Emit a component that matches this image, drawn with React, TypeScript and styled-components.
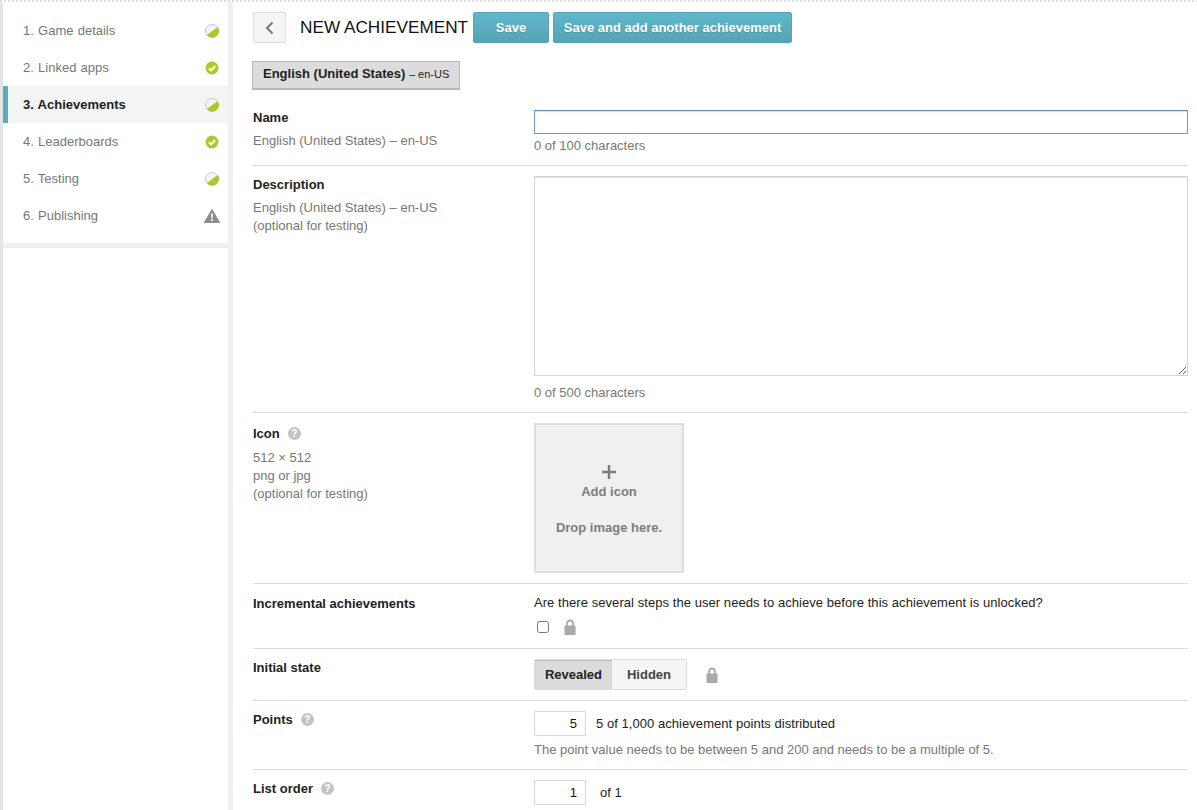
import type { FC } from 'react';
import styled, { createGlobalStyle } from 'styled-components';

const GlobalStyle = createGlobalStyle`
  html, body {
    margin: 0;
    height: 100%;
    overflow: hidden;
    background: #fff;
  }
  body {
    font-family: "Liberation Sans", Arial, sans-serif;
    font-size: 13px;
    color: #222;
  }
  #root {
    height: 100%;
  }
`;

type StepStatus = 'partial' | 'done' | 'warning';

const steps: { label: string; status: StepStatus; active?: boolean }[] = [
  { label: '1. Game details', status: 'partial' },
  { label: '2. Linked apps', status: 'done' },
  { label: '3. Achievements', status: 'partial', active: true },
  { label: '4. Leaderboards', status: 'done' },
  { label: '5. Testing', status: 'partial' },
  { label: '6. Publishing', status: 'warning' },
];

const StatusIcon: FC<{ status: StepStatus }> = ({ status }) => {
  if (status === 'warning') {
    return (
      <svg width="16" height="14" viewBox="0 0 16 14">
        <path d="M8 .5 15.6 13.5H.4Z" fill="#8d8d8d" stroke="#8d8d8d" strokeLinejoin="round" />
        <path d="M7.1 4.4h1.8l-.3 5H7.4Z M7.1 10.3h1.8V12H7.1Z" fill="#fff" />
      </svg>
    );
  }
  if (status === 'done') {
    return (
      <svg width="14" height="14" viewBox="0 0 14 14">
        <circle cx="7" cy="7" r="6.5" fill="#aec927" />
        <path d="M3.9 7.2 6.1 9.4 10.2 5" fill="none" stroke="#fff" strokeWidth="2" />
      </svg>
    );
  }
  return (
    <svg width="14" height="14" viewBox="0 0 14 14">
      <circle cx="7" cy="7" r="6.5" fill="#f4f4f4" stroke="#c9c9c9" />
      <path d="M12.6 2.9A6.5 6.5 0 0 1 1.9 11Z" fill="#aec927" />
    </svg>
  );
};

const LockIcon: FC = () => (
  <svg width="12" height="16" viewBox="0 0 12 16">
    <path d="M3 7V4.5a3 3 0 0 1 6 0V7" fill="none" stroke="#aaa" strokeWidth="1.8" />
    <rect x="0.5" y="6.5" width="11" height="9.5" rx="0.5" fill="#aaa" />
  </svg>
);

const App: FC = () => (
  <Page>
    <GlobalStyle />
    <TopStrip />
    <Body>
      <Sidebar>
        <StepList>
          {steps.map(({ label, status, active }) => (
            <StepItem key={label} $active={active}>
              {label}
              <StatusSlot>
                <StatusIcon status={status} />
              </StatusSlot>
            </StepItem>
          ))}
        </StepList>
      </Sidebar>

      <Main>
        <Header>
          <BackButton aria-label="Back">
            <svg width="9" height="14" viewBox="0 0 9 14">
              <path d="M7.5 1.5 2 7l5.5 5.5" fill="none" stroke="#777" strokeWidth="2" />
            </svg>
          </BackButton>
          <Title>NEW ACHIEVEMENT</Title>
          <PrimaryButton $width={76}>Save</PrimaryButton>
          <PrimaryButton $width={239}>Save and add another achievement</PrimaryButton>
        </Header>

        <LanguageTab>
          <strong>English (United States)</strong> <small>– en-US</small>
        </LanguageTab>

        <Row $bottom={12}>
          <LabelCol>
            <Label $top={-1}>Name</Label>
            <Hint $top={7}>English (United States) – en-US</Hint>
          </LabelCol>
          <div>
            <NameInput />
            <Counter>0 of 100 characters</Counter>
          </div>
        </Row>

        <Row $bottom={12}>
          <LabelCol>
            <Label>Description</Label>
            <Hint $top={7}>
              English (United States) – en-US
              <br />
              (optional for testing)
            </Hint>
          </LabelCol>
          <div>
            <Description />
            <Counter $top={9}>0 of 500 characters</Counter>
          </div>
        </Row>

        <Row>
          <LabelCol>
            <Label $top={2}>
              Icon
              <Help>?</Help>
            </Label>
            <Hint $top={8}>
              512 × 512
              <br />
              png or jpg
              <br />
              (optional for testing)
            </Hint>
          </LabelCol>
          <DropZone>
            <svg width="16" height="16" viewBox="0 0 16 16">
              <path d="M8 1v14M1 8h14" stroke="#7d7d7d" strokeWidth="2.5" />
            </svg>
            <strong>Add icon</strong>
            <strong>Drop image here.</strong>
          </DropZone>
        </Row>

        <Row $bottom={13}>
          <LabelCol>
            <Label $top={1}>Incremental achievements</Label>
          </LabelCol>
          <div>
            <Question>
              Are there several steps the user needs to achieve before this achievement is unlocked?
            </Question>
            <LockedCheck>
              <Checkbox type="checkbox" />
              <LockIcon />
            </LockedCheck>
          </div>
        </Row>

        <Row>
          <LabelCol>
            <Label>Initial state</Label>
          </LabelCol>
          <StateLine>
            <Segments>
              <Segment $selected>Revealed</Segment>
              <Segment>Hidden</Segment>
            </Segments>
            <LockIcon />
          </StateLine>
        </Row>

        <Row $bottom={12}>
          <LabelCol>
            <Label>
              Points
              <Help>?</Help>
            </Label>
          </LabelCol>
          <div>
            <NumberLine>
              <NumberInput defaultValue="5" />
              5 of 1,000 achievement points distributed
            </NumberLine>
            <Counter $top={6}>The point value needs to be between 5 and 200 and needs to be a multiple of 5.</Counter>
          </div>
        </Row>

        <Row>
          <LabelCol>
            <Label>
              List order
              <Help>?</Help>
            </Label>
          </LabelCol>
          <NumberLine $gap={14}>
            <NumberInput defaultValue="1" />
            of 1
          </NumberLine>
        </Row>
      </Main>
    </Body>
  </Page>
);

export default App;

const Page = styled.div`
  height: 100%;
  display: flex;
  flex-direction: column;
  overflow: hidden;
`;

const TopStrip = styled.div`
  flex: none;
  height: 2px;
  background: repeating-linear-gradient(90deg, #dcdcdc 0 2px, #fff 2px 4px);
`;

const Body = styled.div`
  flex: 1;
  display: flex;
  min-height: 0;
`;

const Sidebar = styled.nav`
  flex: none;
  width: 225px;
  box-sizing: content-box;
  border-left: 3px solid #e5e5e5;
  border-right: 5px solid #f0f0f0;
`;

const StepList = styled.ol`
  list-style: none;
  margin: 0;
  padding: 10px 0 9px;
  border-bottom: 5px solid #f0f0f0;
`;

const StepItem = styled.li<{ $active?: boolean }>`
  height: 37px;
  display: flex;
  align-items: center;
  justify-content: space-between;
  box-sizing: border-box;
  padding: 0 8px 0 ${(p) => (p.$active ? 15 : 20)}px;
  border-left: ${(p) => (p.$active ? '5px solid #5aacbe' : 'none')};
  background: ${(p) => (p.$active ? '#f4f4f4' : 'transparent')};
  color: ${(p) => (p.$active ? '#222' : '#777')};
  font-weight: ${(p) => (p.$active ? 'bold' : 'normal')};
  word-spacing: 0.6px;
`;

const StatusSlot = styled.span`
  width: 16px;
  height: 16px;
  display: flex;
  align-items: center;
  justify-content: center;
`;

const Main = styled.main`
  flex: 1;
  min-width: 0;
  padding: 10px 9px 0 20px;
`;

const Header = styled.div`
  display: flex;
  align-items: flex-start;
  height: 32px;
`;

const BackButton = styled.button`
  width: 33px;
  height: 31px;
  margin-right: 14px;
  padding: 0;
  display: flex;
  align-items: center;
  justify-content: center;
  background: #f5f5f5;
  border: 1px solid #dcdcdc;
  border-radius: 2px;
`;

const Title = styled.h1`
  margin: 0 5px 0 0;
  width: 168px;
  font-size: 17.2px;
  line-height: 31px;
  font-weight: normal;
  white-space: nowrap;
  color: #111;
`;

const PrimaryButton = styled.button<{ $width: number }>`
  width: ${(p) => p.$width}px;
  height: 31px;
  margin-right: 4px;
  padding: 0;
  font: bold 13px "Liberation Sans", Arial, sans-serif;
  color: #fff;
  text-shadow: 0 1px 1px rgba(0, 0, 0, 0.15);
  background: linear-gradient(#5fb8cb, #55a3b5);
  border: 1px solid #55a3b5;
  border-radius: 2px;
`;

const LanguageTab = styled.div`
  display: block;
  width: fit-content;
  box-sizing: border-box;
  height: 29px;
  margin: 17px 0 10px -1px;
  padding: 0 10px;
  line-height: 24px;
  background: #dcdcdc;
  border: 2px solid #b9b9b9;
  border-width: 1px 1px 2px;
  color: #222;

  small {
    font-size: 11px;
  }
`;

const Row = styled.section<{ $bottom?: number }>`
  display: grid;
  grid-template-columns: 281px 1fr;
  padding: 10px 0 ${(p) => p.$bottom ?? 10}px;
  border-bottom: 1px solid #ddd;

  &:last-child {
    border-bottom: none;
  }
`;

const LabelCol = styled.div`
  padding-top: 0;
`;

const Label = styled.div<{ $top?: number }>`
  display: flex;
  align-items: center;
  margin-top: ${(p) => p.$top ?? 0}px;
  min-height: 16px;
  font-weight: bold;
  color: #222;
`;

const Help = styled.span`
  width: 13px;
  height: 13px;
  margin-left: 8px;
  border-radius: 50%;
  background: #c4c4c4;
  color: #fff;
  font-size: 10px;
  font-weight: bold;
  line-height: 13px;
  text-align: center;
`;

const Hint = styled.div<{ $top?: number }>`
  margin-top: ${(p) => p.$top ?? 0}px;
  line-height: 18px;
  color: #777;
`;

const NameInput = styled.input`
  display: block;
  width: 100%;
  height: 24px;
  box-sizing: border-box;
  border: 1px solid #6a9bcb;
  border-top-color: #5f8fc0;
  box-shadow: inset 0 1px 1px #ddd;
  outline: none;
`;

const Counter = styled.div<{ $top?: number }>`
  margin-top: ${(p) => p.$top ?? 4}px;
  line-height: 15px;
  color: #777;
`;

const Description = styled.textarea`
  display: block;
  width: 100%;
  height: 200px;
  box-sizing: border-box;
  border: 1px solid #d4d4d4;
  box-shadow: inset 0 1px 1px #e6e6e6;
  outline: none;
`;

const DropZone = styled.div`
  width: 150px;
  height: 150px;
  box-sizing: border-box;
  display: flex;
  flex-direction: column;
  align-items: center;
  padding-top: 39px;
  background: #f0f0f0;
  border: 2px solid #dedede;
  color: #7d7d7d;

  strong {
    line-height: 16px;
    margin-top: 4px;
  }

  strong + strong {
    margin-top: 20px;
  }
`;

const Question = styled.div`
  line-height: 18px;
  color: #222;
  letter-spacing: 0.06px;
`;

const LockedCheck = styled.div`
  display: flex;
  align-items: center;
  height: 16px;
  margin-top: 7px;
  gap: 15px;
`;

const Checkbox = styled.input`
  width: 12px;
  height: 12px;
  margin: 0 0 0 3px;
`;

const StateLine = styled.div`
  display: flex;
  align-items: center;
  gap: 19px;
`;

const Segments = styled.div`
  display: flex;
  height: 31px;
  box-sizing: border-box;
  border: 1px solid #dcdcdc;
  border-radius: 2px;
`;

const Segment = styled.div<{ $selected?: boolean }>`
  display: flex;
  align-items: center;
  justify-content: center;
  width: ${(p) => (p.$selected ? 77 : 74)}px;
  font-weight: bold;
  color: ${(p) => (p.$selected ? '#222' : '#444')};
  background: ${(p) => (p.$selected ? '#dcdcdc' : '#f5f5f5')};
  box-shadow: ${(p) => (p.$selected ? 'inset 0 1px 1px #bbb' : 'none')};
`;

const NumberLine = styled.div<{ $gap?: number }>`
  display: flex;
  align-items: center;
  gap: ${(p) => p.$gap ?? 10}px;
  color: #222;
  letter-spacing: 0.05px;
`;

const NumberInput = styled.input`
  width: 52px;
  height: 25px;
  box-sizing: border-box;
  padding: 0 8px;
  border: 1px solid #d9d9d9;
  font: 13px "Liberation Sans", Arial, sans-serif;
  color: #111;
  text-align: right;
  outline: none;
`;
